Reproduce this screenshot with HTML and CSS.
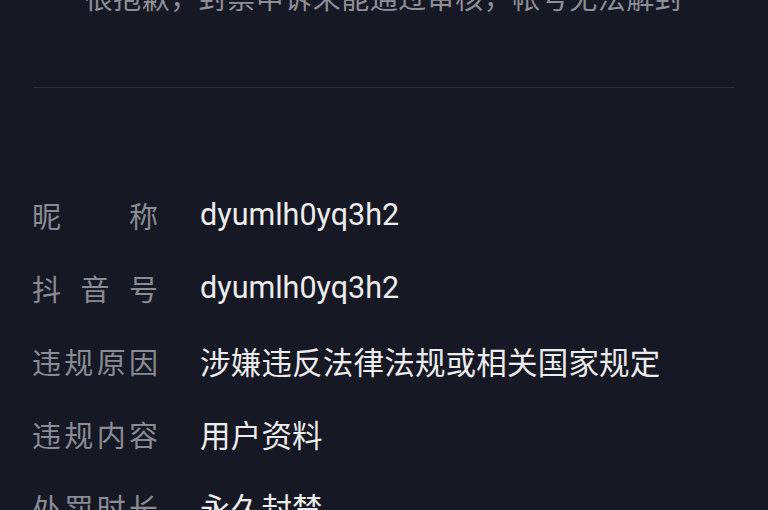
FILE: index.html
```html
<!DOCTYPE html>
<html lang="zh-CN">
<head>
<meta charset="utf-8">
<link rel="stylesheet" href="styles.css">
</head>
<body>
<div class="page">
  <p class="notice">很抱歉，封禁申诉未能通过审核，帐号无法解封</p>
  <div class="divider"></div>
  <div class="info">
    <div class="row">
      <div class="label"><span>昵</span><span>称</span></div>
      <div class="value latin">dyumlh0yq3h2</div>
    </div>
    <div class="row">
      <div class="label"><span>抖</span><span>音</span><span>号</span></div>
      <div class="value latin">dyumlh0yq3h2</div>
    </div>
    <div class="row">
      <div class="label"><span>违</span><span>规</span><span>原</span><span>因</span></div>
      <div class="value">涉嫌违反法律法规或相关国家规定</div>
    </div>
    <div class="row">
      <div class="label"><span>违</span><span>规</span><span>内</span><span>容</span></div>
      <div class="value">用户资料</div>
    </div>
    <div class="row">
      <div class="label"><span>处</span><span>罚</span><span>时</span><span>长</span></div>
      <div class="value">永久封禁</div>
    </div>
  </div>
</div>
</body>
</html>
```

FILE: styles.css
```css
html, body {
  margin: 0;
  padding: 0;
  background: #161823;
  height: 100%;
  overflow: hidden;
}

.page {
  font-family: Roboto, "Noto Sans CJK SC", sans-serif;
  color: #e9e9eb;
}

.notice {
  margin: -20px 0 0 0;
  height: 40px;
  line-height: 40px;
  font-size: 28px;
  text-align: center;
  color: #8e8f96;
  letter-spacing: 0.5px;
}

.divider {
  margin: 67px 33px 0 33px;
  height: 1px;
  background: #2a2c37;
}

.info {
  padding: 90px 32px 0 32px;
  display: flex;
  flex-direction: column;
}

.row {
  display: flex;
  align-items: center;
  height: 73px;
  font-size: 29px;
}

.label {
  width: 126px;
  flex: none;
  display: flex;
  justify-content: space-between;
  color: #8a8b93;
}

.value {
  margin-left: 42px;
  color: #ececee;
  white-space: nowrap;
  font-size: 30.5px;
  letter-spacing: 0.2px;
}

.latin {
  font-size: 30.5px;
  letter-spacing: 0;
}
```
